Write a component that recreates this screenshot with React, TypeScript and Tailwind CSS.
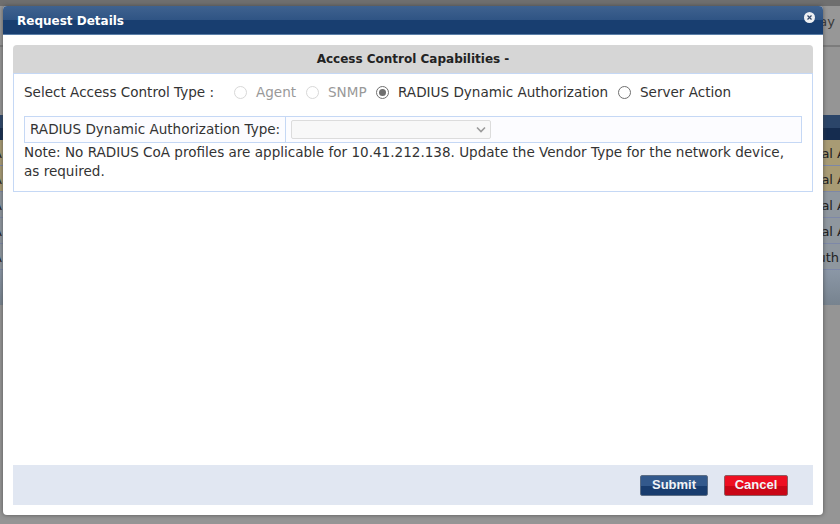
import React from "react";

const font = "font-['DejaVu_Sans',Verdana,sans-serif]";

// page rows that stay visible behind the dialog
const backgroundRows = [
   { text: "al A", bg: "bg-[#a89b74]" },
   { text: "al A", bg: "bg-[#a89b74]" },
   { text: "al A", bg: "bg-[#8f979f]" },
   { text: "al A", bg: "bg-[#8f979f]" },
   { text: "uth", bg: "bg-[#8f979f]" },
];

function Radio({ checked, disabled }: { checked?: boolean; disabled?: boolean }) {
   return (
      <span
         className={`flex h-[13px] w-[13px] shrink-0 items-center justify-center rounded-full border bg-white ${
            disabled ? "border-[#d8d8d8]" : "border-[#6f6f6f]"
         }`}
      >
         {checked && <span className="h-[7px] w-[7px] rounded-full bg-[#6e6e6e]" />}
      </span>
   );
}

function DialogButton({ label, variant }: { label: string; variant: "blue" | "red" }) {
   const colors =
      variant === "blue"
         ? "bg-[linear-gradient(#33598c_0,#33598c_50%,#183c6e_50%,#183c6e_100%)] border-[#5b6d85]"
         : "bg-[linear-gradient(#ee0f22_0,#ee0f22_50%,#c90616_50%,#c90616_100%)] border-[#8f5a60]";
   return (
      <button
         className={`flex h-[21px] items-center justify-center rounded-[2px] border font-['Liberation_Sans',Arial,sans-serif] text-[13px] font-bold text-[#f2f4f7] ${colors} ${
            variant === "blue" ? "w-[68px]" : "w-[64px]"
         }`}
      >
         {label}
      </button>
   );
}

export default function App() {
   return (
      <div className={`relative h-[524px] w-[840px] overflow-hidden bg-[#959595] ${font}`}>
         {/* Dimmed page behind the dialog */}
         <div className="h-[6px] bg-[#6f6f6f]" />
         <div className="flex h-[41px] items-center justify-end border-b-2 border-[#7c7c7c] bg-[#979797] pb-[7px] pr-[5px] text-[13px] text-[#3a3a3a]">
            ay
         </div>
         <div className="h-[68px]" />
         <div className="h-[25px] bg-[linear-gradient(#2b4569_0,#2b4569_50%,#152c4f_50%)]" />
         {backgroundRows.map((row, i) => (
            <div
               key={i}
               className={`flex h-[26px] items-center justify-between overflow-hidden border-b border-[#7d88a8] pt-[3px] text-[13px] text-[#222] whitespace-nowrap ${row.bg}`}
            >
               <span className="ml-[-7px]">A</span>
               <span className={row.text === "uth" ? "mr-[1px]" : "mr-[-6px]"}>{row.text}</span>
            </div>
         ))}
         <div className="h-[35px] bg-[linear-gradient(#8b97a6,#77838f)]" />

         {/* Dialog */}
         <div className="absolute left-[3px] top-[6px] flex h-[509px] w-[820px] flex-col rounded-[4px] bg-white shadow-[0_0_4px_rgba(60,60,60,0.7)]">
            <div className="relative flex h-[29px] shrink-0 items-center rounded-t-[4px] border-b border-[#5b7fa8] bg-[linear-gradient(#3f628f_0,#2f5484_50%,#183e70_50%,#183e70_100%)] pl-[14px] pt-[1px] text-[12px] font-bold text-white">
               Request Details
               <span className="absolute right-[8px] top-[6px] flex h-[11px] w-[11px] items-center justify-center rounded-full bg-[#eef0f3]">
                  <svg width="7" height="7" viewBox="0 0 7 7">
                     <path d="M1.5 1.5l4 4M5.5 1.5l-4 4" stroke="#33486a" strokeWidth="1.2" />
                  </svg>
               </span>
            </div>

            <div className="flex flex-1 flex-col px-[10px] pt-[10px] pb-[10px]">
               <div className="h-[147px] rounded-t-[4px]">
                  <div className="flex h-[28px] items-center justify-center rounded-t-[4px] bg-[#d6d6d6] text-[12px] font-bold text-[#222]">
                     Access Control Capabilities -
                  </div>
                  <div className="h-[119px] border border-[#c5d8f5] px-[10px] text-[13.55px] text-[#333]">
                     <div className="flex h-[36px] items-center">
                        <span className="w-[210px] whitespace-nowrap">Select Access Control Type :</span>
                        <Radio disabled />
                        <span className="ml-[9px] w-[50px] text-[#999]">Agent</span>
                        <Radio disabled />
                        <span className="ml-[9px] w-[48px] text-[#999]">SNMP</span>
                        <Radio checked />
                        <span className="ml-[9px] w-[220px] whitespace-nowrap">RADIUS Dynamic Authorization</span>
                        <Radio />
                        <span className="ml-[9px] whitespace-nowrap">Server Action</span>
                     </div>
                     <div className="mt-[6px] flex h-[27px] w-[778px] border border-[#c5d8f5] bg-[#fcfcff]">
                        <div className="flex w-[261px] items-center border-r border-[#c5d8f5] pl-[5px] whitespace-nowrap">
                           RADIUS Dynamic Authorization Type:
                        </div>
                        <div className="flex items-center pl-[5px]">
                           <div className="flex h-[19px] w-[200px] items-center justify-end rounded-[2px] border border-[#dcdcdc] bg-[#f8f8f8] pr-[3px]">
                              <svg width="12" height="8" viewBox="0 0 12 8" fill="none">
                                 <path d="M2 1.5l4 4 4-4" stroke="#9a9a9a" strokeWidth="1.6" />
                              </svg>
                           </div>
                        </div>
                     </div>
                     <div className="w-[770px] leading-[19px]">
                        Note: No RADIUS CoA profiles are applicable for 10.41.212.138. Update the Vendor Type for the network device, as required.
                     </div>
                  </div>
               </div>

               <div className="flex-1" />

               <div className="flex h-[40px] items-center justify-end gap-[16px] bg-[#e1e7f2] pr-[25px]">
                  <DialogButton label="Submit" variant="blue" />
                  <DialogButton label="Cancel" variant="red" />
               </div>
            </div>
         </div>
      </div>
   );
}
